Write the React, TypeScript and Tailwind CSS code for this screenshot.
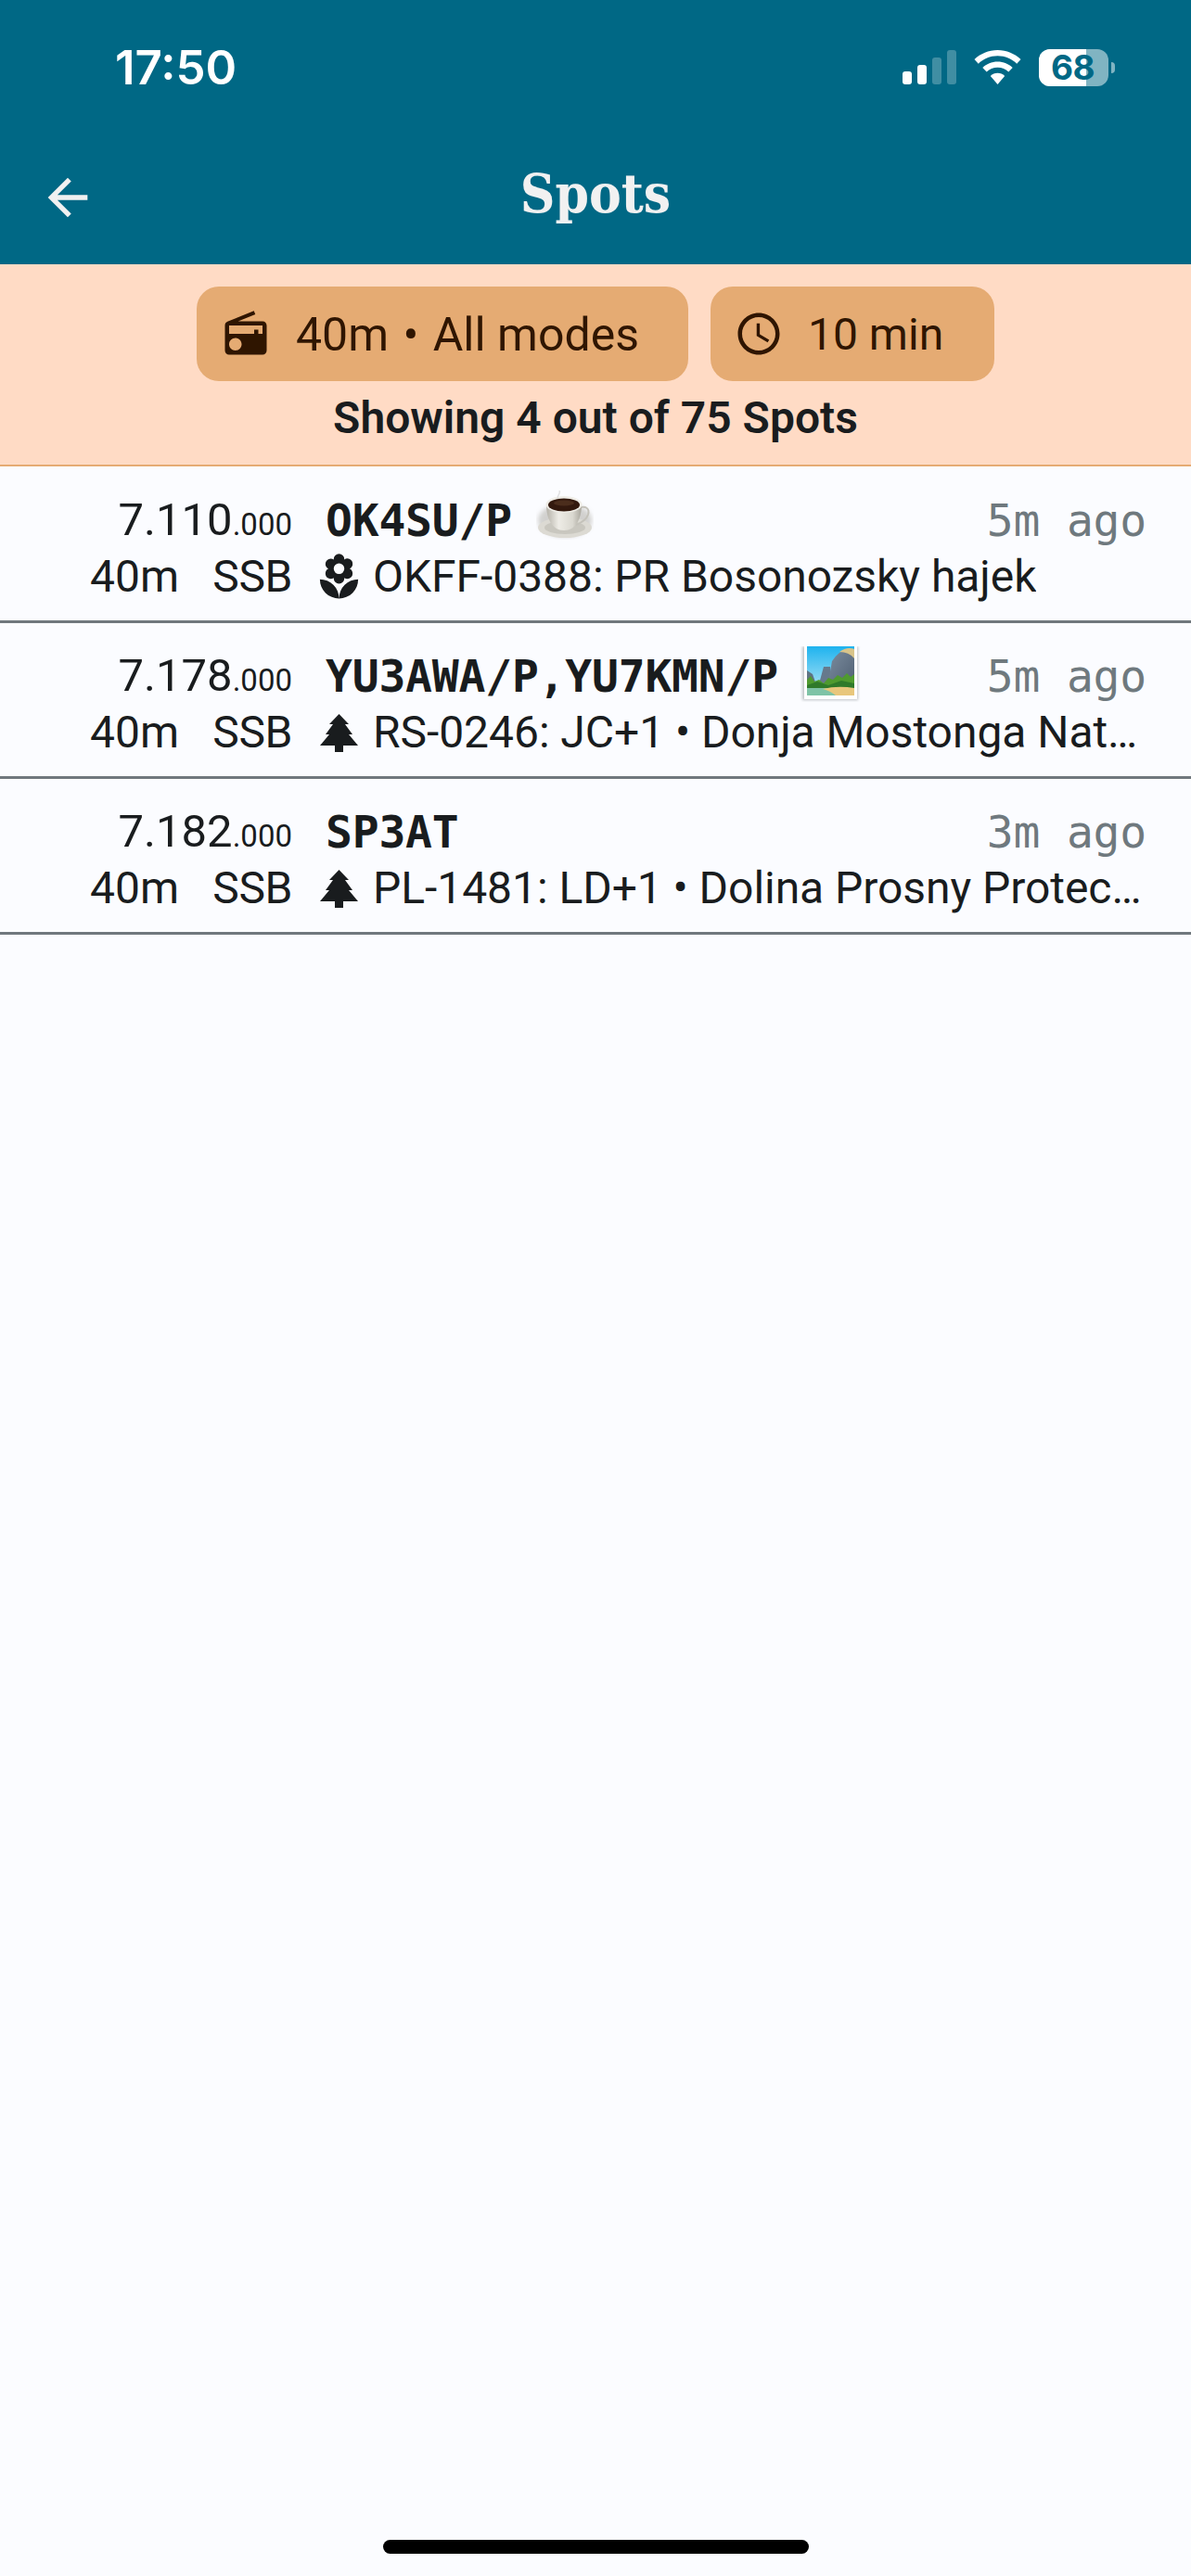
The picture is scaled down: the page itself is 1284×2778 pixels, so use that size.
import { MdRadio, MdAccessTime, MdLocalFlorist, MdArrowBack } from 'react-icons/md'

const roboto = { fontFamily: 'Roboto, sans-serif' }

type Spot = {
    freq: string,
    call: string,
    age: string,
    icon: 'flower' | 'tree',
    detail: string,
    emoji?: 'coffee' | 'park',
}

const spots: Spot[] = [
    { freq: '7.110', call: 'OK4SU/P', age: '5m ago', icon: 'flower', detail: 'OKFF-0388: PR Bosonozsky hajek', emoji: 'coffee' },
    { freq: '7.178', call: 'YU3AWA/P,YU7KMN/P', age: '5m ago', icon: 'tree', detail: 'RS-0246: JC+1 • Donja Mostonga Nature Reserve', emoji: 'park' },
    { freq: '7.182', call: 'SP3AT', age: '3m ago', icon: 'tree', detail: 'PL-1481: LD+1 • Dolina Prosny Protected Landscape' },
]

const TreeIcon = () => (
    <svg viewBox="0 0 41 41" className="w-[41px] h-[41px]" fill="#191c1e">
        <polygon points="20.5,0 31,11 27,11 35,22 31,22 41,34 25,34 25,41 16,41 16,34 0,34 10,22 6,22 14,11 10,11" />
    </svg>
)

const CoffeeEmoji = () => (
    <svg viewBox="0 0 62 53" className="w-[62px] h-[53px] shrink-0">
        <defs>
            <linearGradient id="cupBody" x1="0" y1="0" x2="1" y2="0">
                <stop offset="0%" stopColor="#b5b2a9" />
                <stop offset="35%" stopColor="#eeece6" />
                <stop offset="75%" stopColor="#dad8d0" />
                <stop offset="100%" stopColor="#a9a69d" />
            </linearGradient>
            <filter id="cupBlur" x="-20%" y="-30%" width="140%" height="160%">
                <feGaussianBlur stdDeviation="2.5" />
            </filter>
        </defs>
        <ellipse cx="31" cy="32" rx="29" ry="18" fill="#a8a69f" opacity="0.5" filter="url(#cupBlur)" />
        <ellipse cx="31" cy="40" rx="29" ry="11" fill="#dcdad3" />
        <ellipse cx="31" cy="40" rx="22" ry="7" fill="#c9c7bf" />
        <path d="M46 19c7-3 12 0 10 7-2 6-8 9-13 11" fill="none" stroke="#c4c2ba" strokeWidth="2" />
        <path d="M11 15c0 15 6 28 19 28s19-13 19-28z" fill="url(#cupBody)" />
        <ellipse cx="30" cy="15" rx="19.5" ry="9" fill="#efede7" />
        <ellipse cx="30" cy="15.5" rx="17" ry="7" fill="#33190e" />
        <ellipse cx="30" cy="13.5" rx="11" ry="3" fill="#5c3a26" opacity="0.6" />
        <path d="M24 9c-3-3 3-5 1-9" fill="none" stroke="#d4d4d4" strokeWidth="1.5" opacity="0.7" />
    </svg>
)

const ParkEmoji = () => (
    <svg viewBox="0 0 67 60" className="w-[67px] h-[60px] shrink-0">
        <defs>
            <linearGradient id="parkSky" x1="0" y1="0" x2="0" y2="1">
                <stop offset="0%" stopColor="#1eb3ef" />
                <stop offset="100%" stopColor="#bfe9f4" />
            </linearGradient>
            <linearGradient id="parkRock" x1="0" y1="0" x2="1" y2="1">
                <stop offset="0%" stopColor="#7d8ea0" />
                <stop offset="100%" stopColor="#4f5f72" />
            </linearGradient>
            <filter id="parkBlur" x="-20%" y="-20%" width="140%" height="140%">
                <feGaussianBlur stdDeviation="1.5" />
            </filter>
        </defs>
        <rect x="4" y="0" width="60" height="58" fill="#8d9296" opacity="0.55" filter="url(#parkBlur)" />
        <rect x="6" y="0" width="57" height="57" fill="#ffffff" />
        <rect x="9" y="0" width="51" height="53" fill="url(#parkSky)" />
        <polygon points="9,26 15,30 20,44 9,44" fill="#5f7484" />
        <polygon points="21,44 27,22 34,22 36,44" fill="#66798c" />
        <path d="M31 44 L36 16 Q44 4 52 4 L60 8 L60 44z" fill="url(#parkRock)" />
        <path d="M44 6 Q52 0 60 3 L60 13 Q54 6 44 6z" fill="#d8c48a" />
        <path d="M9 36 L13 32 L17 38 L22 36 L27 40 L32 34 L37 36 L42 31 L47 34 L52 29 L56 33 L60 30 L60 46 L9 46z" fill="#4f9a2f" />
        <path d="M9 42 L20 38 L32 42 L46 37 L60 40 L60 47 L9 47z" fill="#2f7a2a" />
        <rect x="9" y="45" width="51" height="8" fill="#7fc3a6" />
        <path d="M26 46 Q42 42 60 45 L60 53 L40 53 Q34 48 26 46z" fill="#e8c77c" />
    </svg>
)

const StatusBar = () => (
    <div className="flex items-center h-[109px] pt-[36px] pl-[124px] pr-[82px] text-white">
        <span className="text-[51px] leading-none font-semibold flex-1" style={{ fontFamily: 'Inter, sans-serif' }}>17:50</span>
        <div className="flex items-end gap-[6px] h-[37px] mr-[19px]">
            <div className="w-[10px] h-[14px] rounded-[3px] bg-white" />
            <div className="w-[10px] h-[21px] rounded-[3px] bg-white" />
            <div className="w-[10px] h-[29px] rounded-[3px] bg-white/25" />
            <div className="w-[10px] h-[37px] rounded-[3px] bg-white/25" />
        </div>
        <svg viewBox="0 0 51 37" className="w-[51px] h-[37px] mr-[19px]" fill="#ffffff">
            <path d="M25.5 0C15.8 0 7 3.8 0.5 10.1l4.3 4.6C10.1 9.5 17.4 6.3 25.5 6.3s15.4 3.2 20.7 8.4l4.3-4.6C44 3.8 35.2 0 25.5 0z" />
            <path d="M25.5 12.4c-6.3 0-12 2.5-16.2 6.5l4.4 4.6c3-2.9 7.2-4.7 11.8-4.7s8.8 1.8 11.8 4.7l4.4-4.6c-4.2-4-9.9-6.5-16.2-6.5z" />
            <path d="M25.5 24.8c-3 0-5.7 1.2-7.7 3.1L25.5 37l7.7-9.1c-2-1.9-4.7-3.1-7.7-3.1z" />
        </svg>
        <div className="relative w-[75px] h-[40px] rounded-[12px] overflow-hidden bg-white/50">
            <div className="h-full w-[51px] bg-white" />
            <span className="absolute inset-y-0 left-[13px] flex items-center text-[37px] leading-none font-bold tracking-[-0.5px] text-[#006885]" style={{ fontFamily: 'Inter, sans-serif' }}>68</span>
        </div>
        <div className="w-[4px] h-[12px] ml-[3px] rounded-r-full bg-white/50" />
    </div>
)

const Header = () => (
    <header className="bg-[#006885] h-[285px] shrink-0">
        <StatusBar />
        <div className="relative flex items-center justify-center h-[176px] pt-[24px]">
            <MdArrowBack className="absolute left-[41px] top-[72px] text-[#f1f1f1]" size={64} />
            <h1 className="text-[58px] leading-none font-bold text-[#f1f1f1]" style={{ fontFamily: '"DejaVu Serif Condensed", "DejaVu Serif", serif' }}>Spots</h1>
        </div>
    </header>
)

const Filters = () => (
    <section className="bg-[#ffdbc5] border-b-2 border-[#e5ab73] h-[218px] shrink-0 pt-[24px] flex flex-col items-center" style={roboto}>
        <div className="flex gap-[24px] text-[#2f1500]">
            <div className="flex items-center w-[530px] h-[102px] rounded-[24px] bg-[#e5ab73] pl-[26px]">
                <MdRadio size={54} />
                <span className="text-[50px] leading-none ml-[27px] pt-[2px] whitespace-pre">40m<span className="mx-[3px]"> • </span>All modes</span>
            </div>
            <div className="flex items-center w-[306px] h-[102px] rounded-[24px] bg-[#e5ab73] pl-[25px]">
                <MdAccessTime size={54} />
                <span className="text-[48px] leading-none ml-[26px] pt-[2px]">10 min</span>
            </div>
        </div>
        <p className="mt-[12px] text-[48px] leading-[56px] font-semibold text-[#191c1e]">Showing 4 out of 75 Spots</p>
    </section>
)

const SpotRow = ({ spot }: { spot: Spot }) => (
    <li className="h-[168px] border-b-[3px] border-[#70787d] pt-[27px] pl-[97px] pr-[48px] text-[#191c1e]" style={roboto}>
        <div className="flex items-center h-[60px]">
            <div className="w-[218px] shrink-0 text-right text-[49px]">
                {spot.freq}<span className="text-[33px]">.000</span>
            </div>
            <div className="ml-[36px] text-[48px] font-bold tracking-[-0.2px]" style={{ fontFamily: '"DejaVu Sans Mono", monospace' }}>{spot.call}</div>
            {spot.emoji === 'coffee' && <div className="ml-[26px] mb-[12px]"><CoffeeEmoji /></div>}
            {spot.emoji === 'park' && <div className="ml-[22px] mb-[4px]"><ParkEmoji /></div>}
            <div className="ml-auto text-[48px] text-[#6f797e] tracking-[-0.2px]" style={{ fontFamily: '"DejaVu Sans Mono", monospace' }}>{spot.age}</div>
        </div>
        <div className="flex items-center h-[60px] mt-[1px]">
            <div className="flex justify-between w-[218px] shrink-0 text-[48px]">
                <span>40m</span>
                <span className="tracking-[-0.4px]">SSB</span>
            </div>
            <div className="w-[41px] ml-[30px] shrink-0 flex justify-center">
                {spot.icon === 'flower' ? <MdLocalFlorist size={55} className="shrink-0" /> : <TreeIcon />}
            </div>
            <div className="ml-[16px] text-[48px] truncate tracking-[-0.05px]">{spot.detail}</div>
        </div>
    </li>
)

const App = () => (
    <div className="w-[1284px] h-[2778px] flex flex-col bg-[#fbfcff]">
        <Header />
        <Filters />
        <ul className="mt-[1px]">
            {spots.map((spot) => (
                <SpotRow key={spot.call} spot={spot} />
            ))}
        </ul>
        <div className="mt-auto mb-[24px] mx-auto w-[459px] h-[15px] rounded-full bg-black" />
    </div>
)

export default App
